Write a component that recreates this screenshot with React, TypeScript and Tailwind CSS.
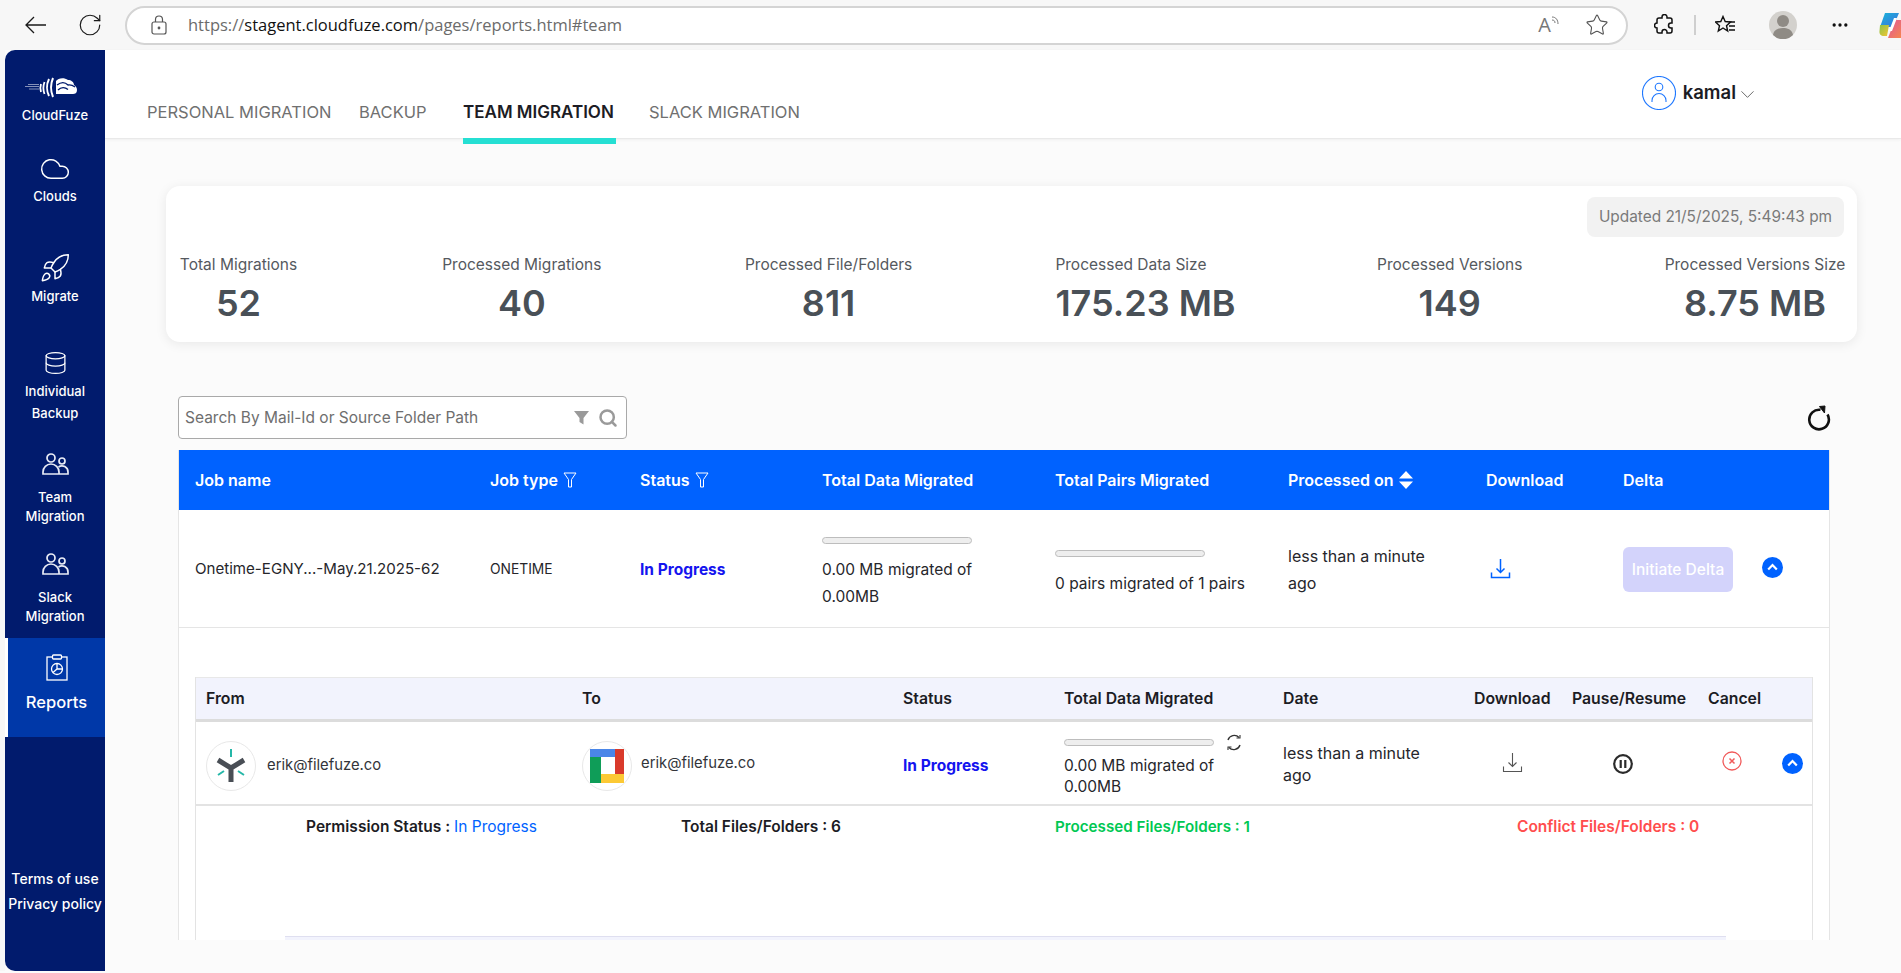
import { RotateCw, Star, Ellipsis, Search, Cloud, Rocket, Database, ChevronDown } from 'lucide-react'

const FONT = "font-['Inter','Noto_Sans',sans-serif]"

function ProgressBar() {
  return <div className="h-[7px] w-[150px] rounded-full border border-[#bdbdbd] bg-[#eeeeee]" />
}

function ChevronCircle() {
  return (
    <svg width="21" height="21" viewBox="0 0 21 21">
      <circle cx="10.5" cy="10.5" r="10.5" fill="#0062ff" />
      <path d="M6.2 12.4 10.5 8l4.3 4.4" fill="none" stroke="#fff" strokeWidth="2.2" />
    </svg>
  )
}

function DownloadIcon({ color, width }: { color: string; width: number }) {
  return (
    <svg width="21" height="21" viewBox="0 0 21 21" fill="none" stroke={color} strokeWidth={width}>
      <path d="M10.5 1v13M6.5 10.5l4 4 4-4M1.5 14.5v5h18v-5" />
    </svg>
  )
}

function FunnelOutline() {
  return (
    <svg width="14" height="16" viewBox="0 0 14 16" fill="none" stroke="#fff" strokeWidth="1">
      <path d="M1 1h12L8.5 7.5V15h-3V7.5z" />
    </svg>
  )
}

function UsersIcon() {
  return (
    <svg width="27" height="22" viewBox="0 0 27 22" fill="none" stroke="#e8ebf5" strokeWidth="1.7">
      <circle cx="9" cy="5" r="4" />
      <circle cx="20" cy="8" r="3" />
      <path d="M1 21v-2a8 8 0 0 1 16 0v2zM16 21h10v-2a6 6 0 0 0-9.500-5" />
    </svg>
  )
}

function CloudFuzeLogo() {
  return (
    <svg width="52" height="21" viewBox="0 0 52 21" fill="none" stroke="#fff">
      <path d="M0 9.500h14M3 7.500h11M4 12h10" strokeWidth=".7" opacity=".75" />
      <path d="M16 7c-1 3-1 5 0 8M19.500 5c-1.500 4-1.500 8 0 12" strokeWidth="1.800" />
      <path d="M24 2c-2.500 5-2.500 12 0 17M28 1c-2.500 6-2.500 13 0 19" strokeWidth="2" />
      <path d="M31 17V4c2-3 8-4 12-1 3 0 6 2 6 5 2 1 3 3 3 5 0 3-2 4-4 4z" fill="#fff" stroke="none" />
      <path d="M32 8c4-3 8-3 11 0 3-.5 5 .5 7 2M33 13c3-3 7-3 10-.5" stroke="#011b6d" strokeWidth="1.300" />
    </svg>
  )
}

function CopilotIcon() {
  return (
    <svg width="24" height="26" viewBox="0 0 24 26" className="shrink-0">
      <defs>
        <linearGradient id="cpA" x1="0" y1="0" x2="1" y2="1">
          <stop offset="0" stopColor="#19b5d8" />
          <stop offset="1" stopColor="#3b6fe0" />
        </linearGradient>
        <linearGradient id="cpB" x1="0" y1="0" x2="1" y2="1">
          <stop offset="0" stopColor="#8bc34a" />
          <stop offset="1" stopColor="#f6c431" />
        </linearGradient>
        <linearGradient id="cpC" x1="0" y1="0" x2="1" y2="1">
          <stop offset="0" stopColor="#e0559c" />
          <stop offset="1" stopColor="#f7894a" />
        </linearGradient>
      </defs>
      <path d="M6 1h14l-6 14H1z" fill="url(#cpA)" />
      <path d="M1 13h9l-2 11H5c-3 0-5-2-4.500-5z" fill="url(#cpB)" />
      <path d="M16 8h8v18H9z" fill="url(#cpC)" />
      <path d="M15 6h3l-5 13h-3z" fill="#fff" />
    </svg>
  )
}

function BrowserBar() {
  return (
    <div className="flex h-[50px] items-center bg-[#f7f7f7] pl-[25px]">
      <svg width="21" height="18" viewBox="0 0 21 18" fill="none" stroke="#1a1a1a" strokeWidth="1.300">
        <path d="M21 9H1M9 1 1 9l8 8" />
      </svg>
      <RotateCw className="ml-[31px] h-[26px] w-[26px] text-[#1a1a1a]" strokeWidth={1.100} />
      <div className="ml-[22px] flex h-[39px] w-[1503px] items-center rounded-full border-2 border-[#d4d4d4] bg-white pl-[24px]">
        <svg width="16" height="20" viewBox="0 0 16 20" fill="none" stroke="#555" strokeWidth="1.200">
          <rect x="1" y="7" width="14" height="12" rx="2" />
          <path d="M4.500 7V4.500a3.500 3.500 0 0 1 7 0V7" />
          <circle cx="8" cy="13" r=".8" fill="#555" />
        </svg>
        <div className="ml-[21px] whitespace-nowrap font-['Open_Sans',sans-serif] text-[16.500px] text-[#6b6b6b]">
          https://<span className="text-[#111]">stagent.cloudfuze.com</span>/pages/reports.html#team
        </div>
        <div className="ml-auto flex items-center gap-[25px] pr-[17px]">
          <div className="flex items-start font-['Open_Sans',sans-serif] text-[20px] leading-[20px] text-[#777]">
            A
            <svg width="9" height="12" viewBox="0 0 9 12" fill="none" stroke="#777" strokeWidth="1">
              <path d="M1 5c2 0 3 1 3 3M1 2c4 0 6 3 6 7" />
            </svg>
          </div>
          <Star className="h-[24px] w-[24px] text-[#555]" strokeWidth={1.100} />
        </div>
      </div>
      <svg width="20" height="22" viewBox="0 0 20 22" fill="none" stroke="#111" strokeWidth="1.500" className="ml-[26px]">
        <path d="M8 3a2.500 2.500 0 0 1 5 0v1h3a2 2 0 0 1 2 2v3h-1a2.500 2.500 0 0 0 0 5h1v3a2 2 0 0 1-2 2h-3v-1a2.500 2.500 0 0 0-5 0v1H5a2 2 0 0 1-2-2v-3a2.500 2.500 0 0 1 0-5V6a2 2 0 0 1 2-2h3z" />
      </svg>
      <div className="ml-[20px] h-[20px] w-[2px] bg-[#cfcfcf]" />
      <svg width="21" height="20" viewBox="0 0 21 20" fill="none" stroke="#111" strokeWidth="1.400" className="ml-[19px]">
        <path d="M8 1.500l2.200 5 5.300.5-4 3.700 1.200 5.300L8 13l-4.700 3 1.200-5.300-4-3.700 5.300-.5z" />
        <path d="M14 7h6M14 11h6M14 15h6" />
      </svg>
      <svg width="28" height="28" viewBox="0 0 28 28" className="ml-[33px]">
        <circle cx="14" cy="14" r="14" fill="#d3d1cd" />
        <circle cx="14" cy="10" r="6" fill="#8f8b85" />
        <path d="M4 24c1-6 6-7 10-7s9 1 10 7a14 14 0 0 1-20 0z" fill="#8f8b85" />
      </svg>
      <Ellipsis className="ml-[33px] h-[20px] w-[20px] text-[#111]" strokeWidth={2} />
      <div className="ml-[29px] w-[22px] overflow-hidden">
        <CopilotIcon />
      </div>
    </div>
  )
}

function NavItem({ icon, lines, className }: { icon: React.ReactNode; lines: string[]; className: string }) {
  return (
    <div className={`flex flex-col items-center text-center text-[13px] font-medium text-white ${className}`}>
      {icon}
      {lines.map(l => (
        <div key={l} className="whitespace-nowrap">{l}</div>
      ))}
    </div>
  )
}

function Sidebar() {
  return (
    <aside className="flex h-[921px] w-[100px] shrink-0 flex-col overflow-hidden rounded-l-[10px] bg-[#011b6d]">
      <NavItem className="h-[100px] pt-[27px] leading-[20px]" icon={<div className="mb-[7px] mr-[9px]"><CloudFuzeLogo /></div>} lines={['CloudFuze']} />
      <NavItem className="h-[92px] pt-[3px] leading-[20px]" icon={<Cloud className="mb-[1px] h-[32px] w-[32px] text-white" strokeWidth={1.100} />} lines={['Clouds']} />
      <NavItem className="h-[93px] pt-[10px] leading-[20px]" icon={<Rocket className="mb-[2px] h-[32px] w-[32px] text-white" strokeWidth={1.100} />} lines={['Migrate']} />
      <NavItem className="h-[105px] pt-[13px] leading-[22px]" icon={<Database className="mb-[2px] h-[30px] w-[25px] text-white" strokeWidth={1.200} />} lines={['Individual', 'Backup']} />
      <NavItem className="h-[100px] pt-[13px] leading-[19px]" icon={<div className="mb-[13px]"><UsersIcon /></div>} lines={['Team', 'Migration']} />
      <NavItem className="h-[98px] pt-[13px] leading-[19px]" icon={<div className="mb-[13px]"><UsersIcon /></div>} lines={['Slack', 'Migration']} />
      <div className="flex h-[99px] flex-col items-center border-l-[3px] border-white bg-[#0038a8] pt-[16px] text-[16.500px] font-medium text-white">
        <svg width="22" height="27" viewBox="0 0 22 27" fill="none" stroke="#fff" strokeWidth="1.300">
          <rect x="1" y="3" width="20" height="23" />
          <rect x="6.500" y="1" width="9" height="4" rx="1" fill="#0038a8" />
          <circle cx="11" cy="15" r="5.500" />
          <path d="M11 15V9.500M11 15l-4 3.500M11 15h5.500" />
        </svg>
        <div className="mt-[10px] leading-[22px]">Reports</div>
      </div>
      <div className="mt-[129px] flex flex-col items-center text-[14px] font-medium leading-[25px] text-white">
        <div>Terms of use</div>
        <div>Privacy policy</div>
      </div>
    </aside>
  )
}

function Header() {
  return (
    <header className="flex h-[89px] items-start border-b border-[#e9e9e9] bg-white shadow-[0_1px_3px_rgba(0,0,0,0.05)]">
      <div className="mt-[52px] flex text-[16.500px] leading-[20px] text-[#707070]">
        <div className="ml-[42px] w-[212px] whitespace-nowrap">PERSONAL MIGRATION</div>
        <div className="w-[104px]">BACKUP</div>
        <div className="w-[186px]">
          <div className="whitespace-nowrap text-[17px] font-semibold text-[#1c1c24]">TEAM MIGRATION</div>
          <div className="mt-[16px] h-[6px] w-[153px] bg-[#25dfd3]" />
        </div>
        <div className="whitespace-nowrap">SLACK MIGRATION</div>
      </div>
      <div className="ml-auto mt-[26px] mr-[142px] flex items-center">
        <svg width="34" height="34" viewBox="0 0 34 34" fill="none" stroke="#1f78ff" strokeWidth="1.100">
          <circle cx="17" cy="17" r="16.500" />
          <circle cx="17" cy="11" r="3.800" />
          <path d="M10 26v-1.500a7 7 0 0 1 14 0V26" />
        </svg>
        <div className="ml-[7px] text-[18.500px] font-semibold text-[#1c1c24]">kamal</div>
        <ChevronDown className="mt-[3px] h-[23px] w-[23px] text-[#666]" strokeWidth={1} />
      </div>
    </header>
  )
}

const STATS = [
  { label: 'Total Migrations', value: '52', w: 'w-[119px] items-center' },
  { label: 'Processed Migrations', value: '40', w: 'w-[160px] items-center' },
  { label: 'Processed File/Folders', value: '811', w: 'w-[166px] items-center' },
  { label: 'Processed Data Size', value: '175.23 MB', w: 'w-[178px] items-start' },
  { label: 'Processed Versions', value: '149', w: 'w-[145px] items-center' },
  { label: 'Processed Versions Size', value: '8.75 MB', w: 'w-[178px] items-center' },
]

function StatsCard() {
  return (
    <div className="ml-[61px] mt-[47px] h-[156px] w-[1691px] rounded-[14px] bg-white px-[13px] pt-[11px] shadow-[0_2px_12px_rgba(0,0,0,0.08)]">
      <div className="flex justify-end">
        <div className="flex h-[40px] w-[257px] items-center justify-center rounded-[8px] bg-[#f2f2f2] text-[15.400px] text-[#7a7a7a]">
          Updated 21/5/2025, 5:49:43 pm
        </div>
      </div>
      <div className="mt-[18px] flex justify-between">
        {STATS.map(s => (
          <div key={s.label} className={`flex flex-col ${s.w}`}>
            <div className="h-[20px] whitespace-nowrap text-[15.500px] leading-[20px] text-[#55595e]">{s.label}</div>
            <div className="mt-[8px] h-[40px] whitespace-nowrap text-[36px] font-semibold leading-[40px] text-[#495057]">{s.value}</div>
          </div>
        ))}
      </div>
    </div>
  )
}

function SearchRow() {
  return (
    <div className="ml-[73px] mt-[54px] flex w-[1653px] items-center justify-between">
      <div className="flex h-[43px] w-[449px] items-center rounded-[4px] border border-[#a9a9a9] bg-white pl-[6px] pr-[8px]">
        <span className="text-[15.500px] text-[#6e6e6e]">Search By Mail-Id or Source Folder Path</span>
        <svg width="15" height="15" viewBox="0 0 15 15" className="ml-auto">
          <path d="M0 1h15L9.500 8v6.500l-4-2.500V8z" fill="#9a9a9a" />
        </svg>
        <Search className="ml-[9px] h-[20px] w-[20px] text-[#9a9a9a]" strokeWidth={3} />
      </div>
      <svg width="24" height="26" viewBox="0 0 24 26" fill="none" stroke="#111" strokeWidth="2.600">
        <path d="M20.500 9.500A9.800 9.800 0 1 1 13.500 4.800" />
        <path d="M12.500 1.500 18 1l-.5 7z" fill="#111" strokeWidth="1" />
      </svg>
    </div>
  )
}

function JobTable() {
  return (
    <div className="ml-[73px] mt-[11px] h-[490px] w-[1652px] overflow-hidden border-r border-l border-[#e5e5e5] bg-white">
      <div className="grid h-[60px] grid-cols-[311px_150px_182px_233px_233px_198px_137px_1fr] items-center bg-[#0062ff] text-[16px] font-semibold text-white">
        <div className="pl-[16px]">Job name</div>
        <div className="flex items-center gap-[5px]">Job type <FunnelOutline /></div>
        <div className="flex items-center gap-[5px]">Status <FunnelOutline /></div>
        <div className="whitespace-nowrap">Total Data Migrated</div>
        <div className="whitespace-nowrap">Total Pairs Migrated</div>
        <div className="flex items-center gap-[6px] whitespace-nowrap">
          Processed on
          <svg width="14" height="18" viewBox="0 0 14 18" fill="#fff">
            <path d="M7 0l7 7.500H0zM0 10.500h14L7 18z" />
          </svg>
        </div>
        <div>Download</div>
        <div>Delta</div>
      </div>
      <div className="grid h-[118px] grid-cols-[311px_150px_182px_233px_233px_198px_137px_1fr] border-b border-[#e5e5e5] text-[15.500px] text-[#26262b]">
        <div className="self-center whitespace-nowrap pl-[16px] pt-[2px] text-[15.100px]">Onetime-EGNY...-May.21.2025-62</div>
        <div className="self-center pt-[2px] text-[13.800px]">ONETIME</div>
        <div className="self-center pt-[2px] font-bold text-[#1414ef]">In Progress</div>
        <div className="pt-[27px]">
          <ProgressBar />
          <div className="mt-[12px] leading-[27px]">0.00 MB migrated of<br />0.00MB</div>
        </div>
        <div className="pt-[40px]">
          <ProgressBar />
          <div className="mt-[13px] leading-[27px]">0 pairs migrated of 1 pairs</div>
        </div>
        <div className="pt-[33px] text-[16px] leading-[27px]">less than a minute<br />ago</div>
        <div className="pl-[4px] pt-[48px]"><DownloadIcon color="#0062ff" width={1.500} /></div>
        <div className="flex items-start pt-[37px]">
          <div className="flex h-[45px] w-[110px] items-center justify-center rounded-[6px] bg-[#d3d3fb] text-[15.500px] font-medium text-white">
            Initiate Delta
          </div>
          <div className="ml-[29px] mt-[10px]"><ChevronCircle /></div>
        </div>
      </div>
      <div className="ml-[16px] mt-[49px] h-[263px] w-[1618px] border-r border-l border-[#e3e3e3]">
        <div className="grid h-[45px] grid-cols-[386px_321px_161px_219px_191px_98px_136px_1fr] items-center border-t border-b-[3px] border-t-[#e8e8e8] border-b-[#dcdcdc] bg-[#f2f3fd] pt-[1px] text-[15.800px] font-semibold text-[#1c1c24]">
          <div className="pl-[10px]">From</div>
          <div>To</div>
          <div>Status</div>
          <div className="whitespace-nowrap">Total Data Migrated</div>
          <div>Date</div>
          <div>Download</div>
          <div className="whitespace-nowrap">Pause/Resume</div>
          <div>Cancel</div>
        </div>
        <div className="grid h-[84px] grid-cols-[386px_321px_161px_219px_191px_98px_136px_74px_1fr] border-b-2 border-[#e3e3e3] text-[15.500px] text-[#26262b]">
          <div className="flex items-center pl-[10px] pt-[5px]">
            <div className="flex h-[50px] w-[50px] items-center justify-center rounded-full border border-[#e8e8e8] bg-white">
              <svg width="32" height="36" viewBox="0 0 32 36">
                <path d="M16 1v8M3 27l6-4M29 27l-6-4" stroke="#25b7a8" strokeWidth="2" />
                <path d="M3 12l13 8 13-8M16 20v14" fill="none" stroke="#494e55" strokeWidth="5" />
              </svg>
            </div>
            <span className="ml-[11px] text-[14.800px] text-[#33353a]">erik@filefuze.co</span>
          </div>
          <div className="flex items-center pt-[5px]">
            <div className="flex h-[50px] w-[50px] items-center justify-center rounded-full border border-[#e8e8e8] bg-white">
              <svg width="34" height="34" viewBox="0 0 34 34">
                <rect width="34" height="34" fill="#fff" />
                <path d="M0 0h25v8H0z" fill="#4a86e8" />
                <path d="M25 0h9v25h-9z" fill="#d93a2b" />
                <path d="M11 25h23v9H11z" fill="#fcc934" />
                <path d="M0 8h11v26H0z" fill="#0f9d58" />
              </svg>
            </div>
            <span className="mb-[4px] ml-[9px] text-[14.800px] text-[#33353a]">erik@filefuze.co</span>
          </div>
          <div className="flex items-center whitespace-nowrap pt-[5px] font-bold text-[#1414ef]">In Progress</div>
          <div className="flex flex-col pt-[12px]">
            <div className="flex items-center">
              <ProgressBar />
              <svg width="18" height="17" viewBox="0 0 18 17" fill="none" stroke="#333" strokeWidth="1.400" className="ml-[11px]">
                <path d="M3 6a6.500 6.500 0 0 1 11-2.500M15 11a6.500 6.500 0 0 1-11 2.500" />
                <path d="M11.500 4h3.500V1M6.500 13H3v3" strokeWidth="1.100" />
              </svg>
            </div>
            <div className="mt-[4px] leading-[21px]">0.00 MB migrated of<br />0.00MB</div>
          </div>
          <div className="pt-[20px] text-[16px] leading-[22px]">less than a minute<br />ago</div>
          <div className="pl-[28px] pt-[30px]"><DownloadIcon color="#555" width={1.100} /></div>
          <div className="pl-[41px] pt-[32px]">
            <svg width="20" height="20" viewBox="0 0 20 20" fill="none" stroke="#2b2b2b">
              <circle cx="10" cy="10" r="8.800" strokeWidth="2.200" />
              <path d="M7.700 6v8M12.300 6v8" strokeWidth="2.200" />
            </svg>
          </div>
          <div className="pl-[14px] pt-[29px]">
            <svg width="20" height="20" viewBox="0 0 20 20" fill="none" stroke="#f15a5a" strokeWidth="1.300">
              <circle cx="10" cy="10" r="9" />
              <path d="M7.500 7.500l5 5M12.500 7.500l-5 5" strokeWidth="1.500" />
            </svg>
          </div>
          <div className="pt-[31px]"><ChevronCircle /></div>
        </div>
        <div className="grid grid-cols-[375px_374px_462px_1fr] pl-[110px] pt-[11px] text-[15.500px] font-semibold leading-[20px] text-[#1c1c24]">
          <div className="whitespace-nowrap">Permission Status : <span className="font-normal text-[#0062ff]">In Progress</span></div>
          <div className="whitespace-nowrap">Total Files/Folders : 6</div>
          <div className="whitespace-nowrap text-[15.200px] text-[#00c853]">Processed Files/Folders : 1</div>
          <div className="whitespace-nowrap text-[#ff4d4d]">Conflict Files/Folders : 0</div>
        </div>
        <div className="ml-[89px] mt-[99px] h-[10px] w-[1441px] border-t border-[#dfdff0] bg-[#f2f3fd]" />
      </div>
    </div>
  )
}

export default function App() {
  return (
    <div className={`h-[973px] w-[1901px] overflow-hidden bg-[#fbfbfb] ${FONT}`}>
      <BrowserBar />
      <div className="flex">
        <div className="w-[5px] shrink-0 bg-[#f7f7f7]" />
        <Sidebar />
        <main className="flex-1">
          <Header />
          <StatsCard />
          <SearchRow />
          <JobTable />
        </main>
      </div>
    </div>
  )
}
